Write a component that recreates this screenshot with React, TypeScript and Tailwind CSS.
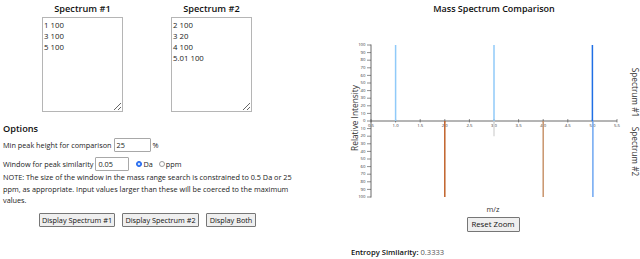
import React from "react";

const font = { fontFamily: '"Open Sans", "Liberation Sans", sans-serif' };

function Chart() {
  const y0 = 121;
  const k = 0.76;
  const xOf = (v: number) => 371 + (v - 0.5) * 49.2;
  const up = [0, 10, 20, 30, 40, 50, 60, 70, 80, 90, 100];
  const down = [10, 20, 30, 40, 50, 60, 70, 80, 90, 100];
  const xt = [0.5, 1, 1.5, 2, 2.5, 3, 3.5, 4, 4.5, 5, 5.5];
  return (
    <svg width={320} height={175} viewBox="320 30 320 175" className="block">
      <line x1={371} y1={44.5} x2={371} y2={197.5} stroke="#444" strokeWidth={0.8} />
      {up.map((v) => (
        <g key={"u" + v}>
          <line x1={367} y1={y0 - v * k} x2={371} y2={y0 - v * k} stroke="#444" strokeWidth={0.6} />
          <text x={365.5} y={y0 - v * k} fontSize={4.3} textAnchor="end" dominantBaseline="middle" fill="#333">
            {v}
          </text>
        </g>
      ))}
      {down.map((v) => (
        <g key={"d" + v}>
          <line x1={367} y1={y0 + v * k} x2={371} y2={y0 + v * k} stroke="#444" strokeWidth={0.6} />
          <text x={365.5} y={y0 + v * k} fontSize={4.3} textAnchor="end" dominantBaseline="middle" fill="#333">
            {v}
          </text>
        </g>
      ))}
      <line x1={371} y1={y0} x2={617} y2={y0} stroke="#444" strokeWidth={0.8} />
      {xt.map((v) => (
        <g key={"x" + v}>
          <line x1={xOf(v)} y1={y0 - 2} x2={xOf(v)} y2={y0 + 1.5} stroke="#444" strokeWidth={0.6} />
          <text x={xOf(v)} y={y0 + 4.5} fontSize={4.3} textAnchor="middle" dominantBaseline="middle" fill="#333">
            {v.toFixed(1)}
          </text>
        </g>
      ))}
      <line x1={xOf(1)} y1={45} x2={xOf(1)} y2={y0} stroke="#90caf9" strokeWidth={1.5} />
      <line x1={xOf(3)} y1={45} x2={xOf(3)} y2={y0} stroke="#90caf9" strokeWidth={1.5} />
      <line x1={xOf(5)} y1={45} x2={xOf(5)} y2={y0} stroke="#1f6fe5" strokeWidth={1.5} />
      <line x1={xOf(2)} y1={y0} x2={xOf(2)} y2={197} stroke="#c0622a" strokeWidth={1.5} />
      <line x1={xOf(3)} y1={y0} x2={xOf(3)} y2={y0 + 20 * k} stroke="#dadada" strokeWidth={1.5} />
      <line x1={xOf(4)} y1={y0} x2={xOf(4)} y2={197} stroke="#c9946c" strokeWidth={1.5} />
      <line x1={xOf(5.01)} y1={y0} x2={xOf(5.01)} y2={197} stroke="#6ea7f2" strokeWidth={1.5} />
      <text
        x={356}
        y={118}
        fontSize={8.3}
        fill="#333"
        textAnchor="middle"
        dominantBaseline="middle"
        transform="rotate(-90 356 118)"
        style={font}
      >
        Relative Intensity
      </text>
      <text
        x={634}
        y={92.5}
        fontSize={8.3}
        fill="#333"
        textAnchor="middle"
        dominantBaseline="middle"
        transform="rotate(90 634 92.5)"
        style={font}
      >
        Spectrum #1
      </text>
      <text
        x={634}
        y={151.5}
        fontSize={8.3}
        fill="#333"
        textAnchor="middle"
        dominantBaseline="middle"
        transform="rotate(90 634 151.5)"
        style={font}
      >
        Spectrum #2
      </text>
    </svg>
  );
}

function Btn({ children, w }: { children: React.ReactNode; w: string }) {
  return (
    <button
      className={`${w} h-[14px] border border-[#767676] bg-[#efefef] text-[7.3px] leading-[12px] text-[#111] rounded-[1px] flex items-center justify-center`}
    >
      {children}
    </button>
  );
}

export default function App() {
  return (
    <div className="w-[640px] h-[259px] bg-white flex text-[#222] overflow-hidden" style={font}>
      <div className="w-[320px] pl-[3px] flex flex-col">
        <div className="flex ml-[39px] gap-[48px]">
          {[
            { t: "Spectrum #1", v: "1 100\n3 100\n5 100" },
            { t: "Spectrum #2", v: "2 100\n3 20\n4 100\n5.01 100" },
          ].map((c) => (
            <div key={c.t} className="w-[81px] flex flex-col items-center">
              <div className="h-[17px] leading-[17px] text-[9.2px] font-semibold text-[#111]">{c.t}</div>
              <textarea
                readOnly
                value={c.v}
                className="w-[81px] h-[95px] border border-[#b5b5b5] text-[7.8px] leading-[11px] px-[1px] pt-[2px] text-[#222] resize-y outline-none"
                style={font}
              />
            </div>
          ))}
        </div>
        <div className="mt-[10px] h-[14px] leading-[14px] text-[9.2px] font-semibold text-[#111]">Options</div>
        <div className="mt-[2px] h-[14px] flex items-center text-[7.3px]">
          <span>Min peak height for comparison</span>
          <span className="ml-[2px] w-[37px] h-[14px] border border-[#a8a8a8] rounded-[1px] pl-[2px] flex items-center">25</span>
          <span className="ml-[2px]">%</span>
        </div>
        <div className="mt-[5px] h-[14px] flex items-center text-[7.3px]">
          <span>Window for peak similarity</span>
          <span className="ml-[2px] w-[34px] h-[14px] border border-[#a8a8a8] rounded-[1px] pl-[2px] flex items-center">0.05</span>
          <span className="ml-[7px] w-[6px] h-[6px] rounded-full bg-[#3b82f6] border border-[#2563eb] flex items-center justify-center">
            <span className="w-[2px] h-[2px] rounded-full bg-white" />
          </span>
          <span className="ml-[1px]">Da</span>
          <span className="ml-[6px] w-[6px] h-[6px] rounded-full border border-[#9a9a9a] bg-white" />
          <span className="ml-[1px]">ppm</span>
        </div>
        <p className="mt-[1px] w-[300px] text-[7.3px] leading-[11.5px]">
          NOTE: The size of the window in the mass range search is constrained to 0.5 Da or 25 ppm, as appropriate. Input
          values larger than these will be coerced to the maximum values.
        </p>
        <div className="mt-[6px] ml-[36px] flex gap-[7px]">
          <Btn w="w-[76px]">Display Spectrum #1</Btn>
          <Btn w="w-[77px]">Display Spectrum #2</Btn>
          <Btn w="w-[50px]">Display Both</Btn>
        </div>
      </div>
      <div className="w-[320px] flex flex-col">
        <div className="pl-[28px] h-[17px] leading-[17px] text-center text-[9px] font-semibold text-[#111]">
          Mass Spectrum Comparison
        </div>
        <div className="mt-[13px]">
          <Chart />
        </div>
        <div className="pl-[26px] text-center h-[8px] leading-[8px] text-[7.4px] text-[#333]">m/z</div>
        <div className="mt-[4px] pl-[26px] flex justify-center">
          <button className="w-[53px] h-[15px] border border-[#767676] bg-[#efefef] text-[7.8px] leading-[13px] text-[#111] rounded-[1px]">
            Reset Zoom
          </button>
        </div>
        <div className="mt-[14px] ml-[31px] h-[12px] leading-[12px] text-[7.6px]">
          <span className="font-semibold text-[#111]">Entropy Similarity:</span>{" "}
          <span className="text-[#555]">0.3333</span>
        </div>
      </div>
    </div>
  );
}
